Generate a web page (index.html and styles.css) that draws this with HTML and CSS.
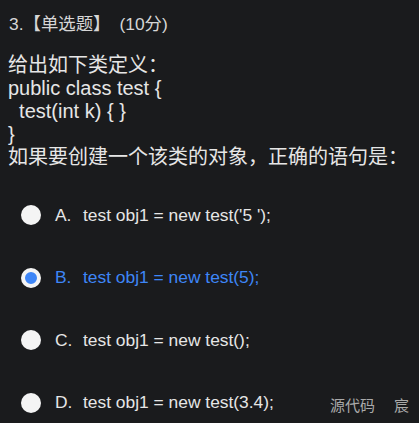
FILE: index.html
```html
<!DOCTYPE html>
<html>
<head>
<meta charset="utf-8">
<link rel="stylesheet" href="styles.css">
</head>
<body>
<div class="page">
  <div class="title">3.【单选题】<span class="score">(10分)</span></div>
  <div class="stem">
    <div>给出如下类定义：</div>
    <div>public class test {</div>
    <div>&nbsp; test(int k) { }</div>
    <div>}</div>
    <div>如果要创建一个该类的对象，正确的语句是：</div>
  </div>
  <div class="options">
    <div class="opt"><span class="radio"></span><span class="letter">A.</span><span class="txt">test obj1 = new test('5 ');</span></div>
    <div class="opt sel"><span class="radio"></span><span class="letter">B.</span><span class="txt">test obj1 = new test(5);</span></div>
    <div class="opt"><span class="radio"></span><span class="letter">C.</span><span class="txt">test obj1 = new test();</span></div>
    <div class="opt"><span class="radio"></span><span class="letter">D.</span><span class="txt">test obj1 = new test(3.4);</span></div>
  </div>
  <div class="mark"><span>源代码</span><span class="mark-name">宸</span></div>
</div>
</body>
</html>
```
FILE: styles.css
```css
html, body {
  margin: 0;
  padding: 0;
  background: #1a1b1d;
}
.page {
  position: relative;
  width: 419px;
  height: 423px;
  overflow: hidden;
  font-family: "Liberation Sans", Arial, "Noto Sans CJK SC", sans-serif;
  color: #e6e6e6;
}
.title {
  padding: 13px 0 0 9px;
  font-size: 17.4px;
  line-height: 22px;
  color: #d6d6d6;
}
.score {
  margin-left: 9px;
}
.stem {
  padding: 19px 0 0 8px;
  font-size: 20px;
  line-height: 23px;
}
.options {
  padding: 36px 0 0 21px;
}
.opt {
  display: flex;
  align-items: center;
  height: 20px;
  margin-bottom: 42.5px;
  font-size: 17.4px;
}
.radio {
  width: 20px;
  height: 20px;
  border-radius: 50%;
  background: #f4f4f4;
  box-sizing: border-box;
  flex: none;
}
.sel .radio {
  border: 4px solid #f4f4f4;
  background: #3e86f7;
}
.letter {
  margin-left: 14px;
  width: 28px;
}
.sel {
  color: #3e86f7;
}
.mark {
  position: absolute;
  left: 330px;
  top: 397px;
  display: flex;
  font-size: 15px;
  line-height: 16px;
  color: #a9a9a9;
  font-family: "Noto Sans CJK SC", sans-serif;
}
.mark-name {
  margin-left: 19px;
}
```
